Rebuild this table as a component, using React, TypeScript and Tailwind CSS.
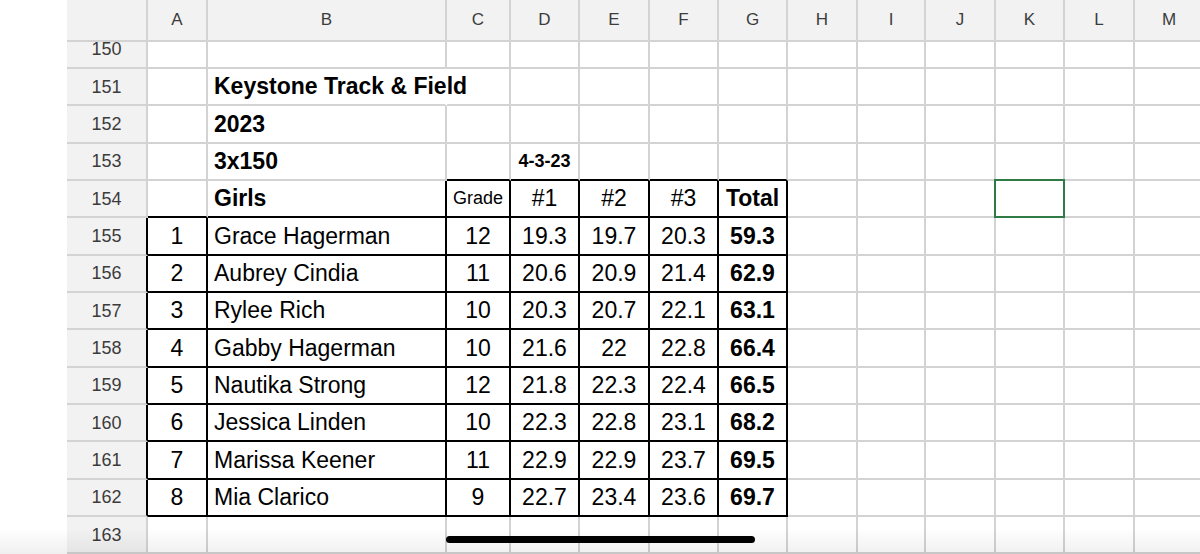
import React from "react";

const cols = ["A", "B", "C", "D", "E", "F", "G", "H", "I", "J", "K", "L", "M"];

const runners = [
  ["1", "Grace Hagerman", "12", "19.3", "19.7", "20.3", "59.3"],
  ["2", "Aubrey Cindia", "11", "20.6", "20.9", "21.4", "62.9"],
  ["3", "Rylee Rich", "10", "20.3", "20.7", "22.1", "63.1"],
  ["4", "Gabby Hagerman", "10", "21.6", "22", "22.8", "66.4"],
  ["5", "Nautika Strong", "12", "21.8", "22.3", "22.4", "66.5"],
  ["6", "Jessica Linden", "10", "22.3", "22.8", "23.1", "68.2"],
  ["7", "Marissa Keener", "11", "22.9", "22.9", "23.7", "69.5"],
  ["8", "Mia Clarico", "9", "22.7", "23.4", "23.6", "69.7"],
];

type Cell = { text: string; bold?: boolean; small?: boolean; left?: boolean };

// row number -> column index (1 = A) -> cell
const cells: Record<number, Record<number, Cell>> = {
  151: { 2: { text: "Keystone Track & Field", bold: true, left: true } },
  152: { 2: { text: "2023", bold: true, left: true } },
  153: { 2: { text: "3x150", bold: true, left: true }, 4: { text: "4-3-23", bold: true, small: true } },
  154: {
    2: { text: "Girls", bold: true, left: true },
    3: { text: "Grade", small: true },
    4: { text: "#1" },
    5: { text: "#2" },
    6: { text: "#3" },
    7: { text: "Total", bold: true },
  },
};
runners.forEach((r, i) => {
  cells[155 + i] = {
    1: { text: r[0] },
    2: { text: r[1], left: true },
    3: { text: r[2] },
    4: { text: r[3] },
    5: { text: r[4] },
    6: { text: r[5] },
    7: { text: r[6], bold: true },
  };
});

const inTable = (r: number, c: number) =>
  (r >= 154 && r <= 162 && c >= 3 && c <= 7) || (r >= 155 && r <= 162 && c >= 1 && c <= 2);

const rows = Array.from({ length: 14 }, (_, i) => 150 + i);

const gridCols =
  "grid grid-cols-[81px_60px_239px_64px_69px_70px_69px_69px_70px_68px_70px_69px_70px_70px]";

const App = () => {
  return (
    <div className="relative w-[1200px] h-[554px] overflow-hidden bg-white font-['Liberation_Sans',Arial,sans-serif] text-black">
      <div className="flex">
        <div className="w-[67px] shrink-0" />
        <div className="w-[1133px] overflow-hidden">
          {/* column letters */}
          <div className={gridCols + " w-[1138px] h-[42px]"}>
            <div className="bg-[#f2f2f2] border-r-2 border-b-2 border-[#d3d3d3]" />
            {cols.map((c) => (
              <div
                key={c}
                className="bg-[#f2f2f2] border-r-2 border-b-2 border-[#d3d3d3] flex items-center justify-center text-[17px] text-[#3c3c3c]"
              >
                {c}
              </div>
            ))}
          </div>

          {/* scrolled body */}
          <div className="h-[512px] overflow-hidden">
            <div className="-mt-[10.33px] w-[1138px]">
              {rows.map((r) => (
                <div key={r} className={gridCols + " h-[37.33px]"}>
                  {Array.from({ length: 14 }, (_, c) => {
                    const cell = cells[r]?.[c];
                    const rightBlack = inTable(r, c) || inTable(r, c + 1);
                    const bottomBlack = inTable(r, c) || inTable(r + 1, c);
                    const hideRight = r === 151 && c === 2;
                    let cls = "relative flex items-center border-r-2 border-b-2 ";
                    cls += hideRight
                      ? "border-r-transparent "
                      : rightBlack
                      ? "border-r-black "
                      : "border-r-[#d3d3d3] ";
                    cls += bottomBlack ? "border-b-black " : "border-b-[#d3d3d3] ";
                    if (c === 0) {
                      return (
                        <div
                          key={c}
                          className={cls + "bg-[#f2f2f2] justify-center text-[18px] leading-[14px] text-[#3c3c3c]"}
                        >
                          {r}
                        </div>
                      );
                    }
                    return (
                      <div
                        key={c}
                        className={
                          cls +
                          (cell?.left ? "justify-start pl-[6px] " : "justify-center ") +
                          (cell?.small ? "text-[18px] " : "text-[23px] ") +
                          (cell?.bold ? "font-bold " : "") +
                          "whitespace-nowrap"
                        }
                      >
                        {cell?.text}
                        {r === 154 && c === 11 && (
                          <div className="absolute -top-[2px] -left-[2px] -right-[2px] -bottom-[2px] border-2 border-[#2f7a45]" />
                        )}
                      </div>
                    );
                  })}
                </div>
              ))}
            </div>
          </div>
        </div>
      </div>

      {/* bottom fade + home indicator */}
      <div className="absolute bottom-0 left-0 right-0 h-[26px] bg-linear-to-b from-transparent to-black/[0.06]" />
      <div className="absolute bottom-[11px] left-[446px] w-[309px] h-[7px] rounded-full bg-black" />
    </div>
  );
};

export default App;
